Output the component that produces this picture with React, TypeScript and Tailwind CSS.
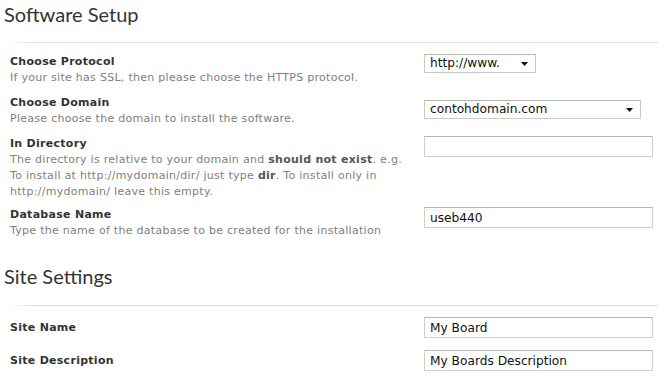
import React from 'react';

const body = { fontFamily: '"DejaVu Sans", Verdana, sans-serif' };
const head = { fontFamily: 'Lato, "Open Sans", "Segoe UI", sans-serif' };

const Arrow = () => (
  <svg width="7" height="4" viewBox="0 0 7 4" className="shrink-0">
    <path d="M0 0h7L3.5 4z" fill="#111" />
  </svg>
);

const SelectBox = ({ value, width }: { value: string; width: string }) => (
  <div
    className={`${width} h-[19px] flex items-center justify-between pl-[5px] pr-[7px] bg-white border border-[#c9c9c9] border-t-[#b5b5b5] text-[12.2px] text-[#111] leading-none`}
  >
    <span>{value}</span>
    <Arrow />
  </div>
);

const TextBox = ({ value }: { value?: string }) => (
  <input
    readOnly
    defaultValue={value}
    className="w-[229px] h-[21px] px-[5px] bg-white border border-[#cfcfcf] border-t-[#b5b5b5] text-[12.2px] text-[#111] outline-none"
    style={body}
  />
);

const Field = ({
  label,
  children,
}: {
  label: string;
  children?: React.ReactNode;
}) => (
  <div className="w-[414px] shrink-0 tracking-[0.28px]">
    <div className="text-[11px] leading-4 font-bold text-[#333]">{label}</div>
    {children && (
      <div className="text-[11px] leading-4 text-[#808080]">{children}</div>
    )}
  </div>
);

const Heading = ({ title }: { title: string }) => (
  <h2 className="pl-1 text-[20px] leading-7 text-[#333]" style={head}>
    {title}
  </h2>
);

const Divider = () => (
  <div className="ml-[8px] h-px bg-gradient-to-r from-white via-[#d4e1e9] to-[#d4e1e9] from-0% via-[3%]" />
);

export default function App() {
  return (
    <div className="w-[658px] h-[377px] bg-white overflow-hidden" style={body}>
      <Heading title="Software Setup" />
      <div className="mt-[14px]">
        <Divider />
      </div>

      <div className="pl-[10px]">
        <div className="flex mt-[11px]">
          <Field label="Choose Protocol">
            If your site has SSL, then please choose the HTTPS protocol.
          </Field>
          <SelectBox value="http://www." width="w-[112px]" />
        </div>

        <div className="flex mt-[9px]">
          <Field label="Choose Domain">
            Please choose the domain to install the software.
          </Field>
          <div className="mt-[5px]">
            <SelectBox value="contohdomain.com" width="w-[217px]" />
          </div>
        </div>

        <div className="flex mt-[9px]">
          <Field label="In Directory">
            The directory is relative to your domain and{' '}
            <b className="text-[#555]">should not exist</b>. e.g.
            <br />
            To install at http://mydomain/dir/ just type{' '}
            <b className="text-[#555]">dir</b>. To install only in
            <br />
            http://mydomain/ leave this empty.
          </Field>
          <TextBox />
        </div>

        <div className="flex mt-[7px]">
          <Field label="Database Name">
            Type the name of the database to be created for the installation
          </Field>
          <TextBox value="useb440" />
        </div>
      </div>

      <div className="mt-[23px]">
        <Heading title="Site Settings" />
      </div>
      <div className="mt-[15px]">
        <Divider />
      </div>

      <div className="pl-[10px]">
        <div className="flex items-center mt-[11px]">
          <Field label="Site Name" />
          <TextBox value="My Board" />
        </div>
        <div className="flex items-center mt-[12px]">
          <Field label="Site Description" />
          <TextBox value="My Boards Description" />
        </div>
      </div>
    </div>
  );
}
